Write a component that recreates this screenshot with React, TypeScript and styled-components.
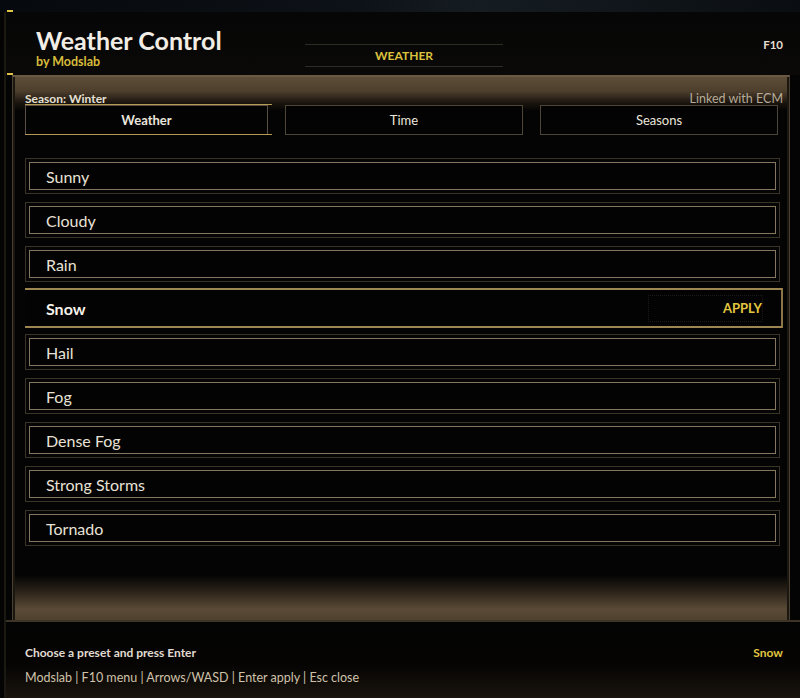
import styled, { createGlobalStyle } from "styled-components";

const GlobalStyle = createGlobalStyle`
  html, body {
    margin: 0;
    padding: 0;
    background: #030303;
  }
  body {
    font-family: Lato, "Noto Sans", "Liberation Sans", sans-serif;
  }
`;

const Screen = styled.div`
  width: 800px;
  height: 698px;
  overflow: hidden;
  display: flex;
  flex-direction: column;
  background: #040404;
`;

const WorldStrip = styled.div`
  height: 12px;
  background: linear-gradient(90deg, #06090d 0%, #0d1218 45%, #151c22 60%, #0a0e12 100%);
`;

const Frame = styled.div`
  position: relative;
  flex: 1;
  display: flex;
  flex-direction: column;
  border-left: 2px solid #1c1812;
  margin-left: 4px;
`;

const Tick = styled.span<{ $top: number }>`
  position: absolute;
  left: 1px;
  top: ${(p) => p.$top}px;
  width: 6px;
  height: 2px;
  background: #e0c247;
`;

const Header = styled.header`
  height: 63px;
  box-sizing: border-box;
  display: grid;
  grid-template-columns: 269px 198px 1fr;
  align-items: start;
  padding: 13px 17px 0 30px;
  background: linear-gradient(180deg, #060606 0%, #0a0908 100%);
`;

const TitleBlock = styled.div`
  display: flex;
  flex-direction: column;
`;

const Title = styled.h1`
  margin: 0;
  font-size: 25px;
  font-weight: 700;
  color: #f2eee6;
  line-height: 30px;
`;

const Byline = styled.div`
  font-size: 12.5px;
  font-weight: 700;
  color: #d8bb3c;
  line-height: 14px;
`;

const ModeTab = styled.div`
  height: 21px;
  margin-top: 19px;
  display: flex;
  align-items: center;
  justify-content: center;
  border-top: 1px solid #2e2a24;
  border-bottom: 1px solid #2e2a24;
  font-size: 12px;
  font-weight: 700;
  color: #dcc23e;
`;

const Hotkey = styled.div`
  justify-self: end;
  margin-top: 13px;
  font-size: 11.5px;
  line-height: 14px;
  font-weight: 700;
  color: #e6dfd2;
`;

const Panel = styled.main`
  height: 545px;
  margin: 0 10px 0 6px;
  display: flex;
  flex-direction: column;
  padding: 15px 4px 0 12px;
  box-sizing: border-box;
  border-top: 2px solid #6a5a44;
  border-left: 1px solid #4a3f31;
  border-right: 1px solid #4a3f31;
  box-shadow: inset 6px 0 0 -4px #1a1610, inset -6px 0 0 -4px #1a1610;
  background: linear-gradient(
    180deg,
    #5d4d38 0px,
    #4e3f2d 14px,
    #1a140e 26px,
    #040404 34px,
    #040404 498px,
    #2a2218 514px,
    #5a4a36 532px,
    #4e402f 545px
  );
`;

const SeasonRow = styled.div`
  display: flex;
  justify-content: space-between;
  align-items: flex-end;
  height: 13px;
  margin-right: 2px;
  font-size: 12px;
  line-height: 13px;
`;

const SeasonLabel = styled.span`
  color: #e6e0d4;
  font-weight: 700;
`;

const Linked = styled.span`
  color: #b7ab98;
  font-size: 12.5px;
`;

const TabRow = styled.div`
  display: grid;
  grid-template-columns: 243px 238px 238px;
  column-gap: 17px;
`;

const Tab = styled.div<{ $active?: boolean }>`
  position: relative;
  height: 30px;
  box-sizing: border-box;
  display: flex;
  align-items: center;
  justify-content: center;
  font-size: 13px;
  font-weight: ${(p) => (p.$active ? 700 : 400)};
  color: #ebe6dc;
  background: #030303;
  border: 1px solid ${(p) => (p.$active ? "#5a4f40" : "#4d4538")};
  ${(p) =>
    p.$active &&
    `
    &::before, &::after {
      content: "";
      position: absolute;
      left: -1px;
      right: -5px;
      height: 1px;
      background: #b59a55;
    }
    &::before { top: -2px; }
    &::after { bottom: -1px; }
  `}
`;

const List = styled.ul`
  list-style: none;
  margin: 23px 0 0;
  padding: 0;
  display: flex;
  flex-direction: column;
  gap: 8px;
`;

const Item = styled.li<{ $selected?: boolean }>`
  height: 36px;
  box-sizing: border-box;
  display: flex;
  align-items: center;
  justify-content: space-between;
  padding: 0 16px 0 20px;
  margin-right: 5px;
  font-size: 16px;
  color: #e8e2d6;
  background: #030303;
  border: 1px solid #3b3328;
  box-shadow: inset 0 0 0 3px #050505, inset 0 0 0 4px #85775f;
  ${(p) =>
    p.$selected &&
    `
    height: 40px;
    margin: -2px 2px -2px 0;
    padding: 0 18px 0 21px;
    font-weight: 700;
    color: #f6f2ea;
    border: none;
    border-top: 2px solid #9e8653;
    border-bottom: 2px solid #9e8653;
    border-right: 2px solid #8a7548;
    box-shadow: none;
  `}
`;

const ApplyBox = styled.span`
  width: 115px;
  height: 27px;
  box-sizing: border-box;
  display: flex;
  align-items: center;
  justify-content: flex-end;
  border: 1px dotted #1c1a16;
  font-size: 13px;
  font-weight: 700;
  color: #e2c640;
`;

const Footer = styled.footer`
  flex: 1;
  display: flex;
  flex-direction: column;
  padding: 22px 17px 0 19px;
  border-top: 2px solid #3e3426;
  background: linear-gradient(180deg, #040404 0%, #050403 55%, #1a140d 100%);
`;

const FooterRow = styled.div`
  display: flex;
  justify-content: space-between;
  align-items: center;
  height: 16px;
  font-size: 12px;
`;

const Hint = styled.span`
  color: #e0dbd1;
  font-weight: 700;
`;

const Current = styled.span`
  color: #e2c640;
  font-weight: 700;
`;

const Keys = styled.div`
  margin-top: 10px;
  font-size: 12.5px;
  color: #cfc2aa;
`;

const presets = [
  "Sunny",
  "Cloudy",
  "Rain",
  "Snow",
  "Hail",
  "Fog",
  "Dense Fog",
  "Strong Storms",
  "Tornado",
];

export default function App() {
  const selected = "Snow";
  return (
    <Screen>
      <GlobalStyle />
      <WorldStrip />
      <Frame>
        <Tick $top={-2} />
        <Tick $top={61} />
        <Header>
          <TitleBlock>
            <Title>Weather Control</Title>
            <Byline>by Modslab</Byline>
          </TitleBlock>
          <ModeTab>WEATHER</ModeTab>
          <Hotkey>F10</Hotkey>
        </Header>
        <Panel>
          <SeasonRow>
            <SeasonLabel>Season: Winter</SeasonLabel>
            <Linked>Linked with ECM</Linked>
          </SeasonRow>
          <TabRow>
            <Tab $active>Weather</Tab>
            <Tab>Time</Tab>
            <Tab>Seasons</Tab>
          </TabRow>
          <List>
            {presets.map((name) => (
              <Item key={name} $selected={name === selected}>
                {name}
                {name === selected && <ApplyBox>APPLY</ApplyBox>}
              </Item>
            ))}
          </List>
        </Panel>
        <Footer>
          <FooterRow>
            <Hint>Choose a preset and press Enter</Hint>
            <Current>{selected}</Current>
          </FooterRow>
          <Keys>Modslab | F10 menu | Arrows/WASD | Enter apply | Esc close</Keys>
        </Footer>
      </Frame>
    </Screen>
  );
}
